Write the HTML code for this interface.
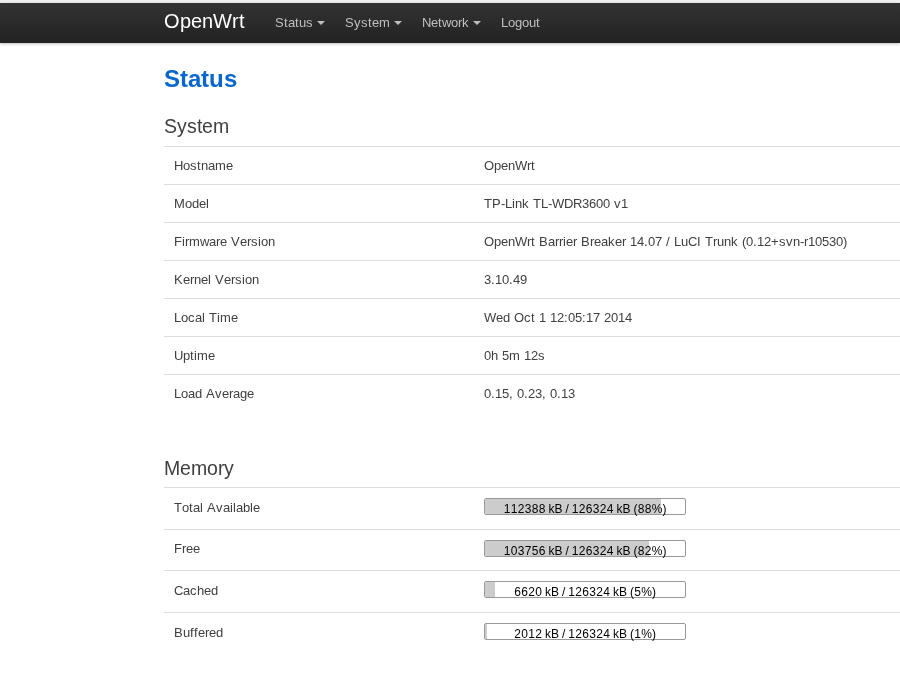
<!DOCTYPE html>
<html><head><meta charset="utf-8">
<style>
html,body{margin:0;padding:0;width:900px;height:700px;overflow:hidden;background:#fff;}
body{font-family:"Liberation Sans",sans-serif;font-kerning:none;font-size:13px;line-height:18px;color:#404040;position:relative;}
#wrap{position:absolute;left:0;top:0;width:900px;height:700px;will-change:transform;}
#strip{position:absolute;left:0;top:0;width:900px;height:3px;background:#f0f0f0;}
#nav{position:absolute;left:0;top:3px;width:900px;height:40px;background:linear-gradient(to bottom,#333 0%,#222 100%);box-shadow:0 1px 3px rgba(0,0,0,.25);}
.t{position:absolute;white-space:nowrap;}
i{display:inline-block;font-style:normal;}
#brand{left:164px;top:-2px;height:40px;line-height:40px;font-size:20px;color:#fff;}
.ni{top:0;height:40px;line-height:40px;font-size:13px;color:#bfbfbf;}
.caret{position:absolute;top:18px;width:0;height:0;border-left:4px solid transparent;border-right:4px solid transparent;border-top:4px solid #bfbfbf;}
h2{position:absolute;left:164px;margin:0;font-size:24px;font-weight:bold;color:#0866cf;line-height:30px;white-space:nowrap;}
.leg{left:164px;font-size:19.5px;line-height:24px;color:#404040;}
.hl{position:absolute;left:164px;width:736px;height:1px;background:#ddd;}
.c{font-size:13px;line-height:18px;color:#404040;}
.bar{position:absolute;left:484px;width:200px;height:15px;border:1px solid #999;border-radius:2px;background:#fff;}
.fill{position:absolute;left:0;top:0;bottom:0;background:#ccc;border-radius:1px 0 0 1px;}
.btxt{position:absolute;left:0;right:0;top:3px;text-align:center;font-size:12px;line-height:15px;color:#000;white-space:nowrap;}
</style></head><body><div id="wrap">
<div id="strip"></div>
<div id="nav">
<div class="t" id="brand"><i style="width:16px">O</i><i style="width:11px">p</i><i style="width:11px">e</i><i style="width:11px">n</i><i style="width:19px">W</i><i style="width:7px">r</i><i style="width:6px">t</i></div>
<div class="t ni" style="left:275px"><i style="width:9px">S</i><i style="width:4px">t</i><i style="width:7px">a</i><i style="width:4px">t</i><i style="width:7px">u</i><i style="width:7px">s</i></div><div class="caret" style="left:317px"></div>
<div class="t ni" style="left:345px"><i style="width:9px">S</i><i style="width:7px">y</i><i style="width:7px">s</i><i style="width:4px">t</i><i style="width:7px">e</i><i style="width:11px">m</i></div><div class="caret" style="left:394px"></div>
<div class="t ni" style="left:422px"><i style="width:9px">N</i><i style="width:7px">e</i><i style="width:4px">t</i><i style="width:9px">w</i><i style="width:7px">o</i><i style="width:4px">r</i><i style="width:7px">k</i></div><div class="caret" style="left:473px"></div>
<div class="t ni" style="left:501px"><i style="width:7px">L</i><i style="width:7px">o</i><i style="width:7px">g</i><i style="width:7px">o</i><i style="width:7px">u</i><i style="width:4px">t</i></div>
</div>
<h2 style="top:64px"><i style="width:16px">S</i><i style="width:8px">t</i><i style="width:13px">a</i><i style="width:8px">t</i><i style="width:15px">u</i><i style="width:13px">s</i></h2>
<div class="t leg" style="top:114px"><i style="width:13px">S</i><i style="width:10px">y</i><i style="width:10px">s</i><i style="width:5px">t</i><i style="width:11px">e</i><i style="width:16px">m</i></div>
<div class="hl" style="top:146px"></div>
<div class="t c" style="left:174px;top:157px"><i style="width:9px">H</i><i style="width:7px">o</i><i style="width:7px">s</i><i style="width:4px">t</i><i style="width:7px">n</i><i style="width:7px">a</i><i style="width:11px">m</i><i style="width:7px">e</i></div><div class="t c" style="left:484px;top:157px"><i style="width:10px">O</i><i style="width:7px">p</i><i style="width:7px">e</i><i style="width:7px">n</i><i style="width:12px">W</i><i style="width:4px">r</i><i style="width:4px">t</i></div>
<div class="hl" style="top:184px"></div>
<div class="t c" style="left:174px;top:195px"><i style="width:11px">M</i><i style="width:7px">o</i><i style="width:7px">d</i><i style="width:7px">e</i><i style="width:3px">l</i></div><div class="t c" style="left:484px;top:195px"><i style="width:8px">T</i><i style="width:9px">P</i><i style="width:4px">-</i><i style="width:7px">L</i><i style="width:3px">i</i><i style="width:7px">n</i><i style="width:7px">k</i><i style="width:4px">&nbsp;</i><i style="width:8px">T</i><i style="width:7px">L</i><i style="width:4px">-</i><i style="width:12px">W</i><i style="width:9px">D</i><i style="width:9px">R</i><i style="width:7px">3</i><i style="width:7px">6</i><i style="width:7px">0</i><i style="width:7px">0</i><i style="width:4px">&nbsp;</i><i style="width:7px">v</i><i style="width:7px">1</i></div>
<div class="hl" style="top:222px"></div>
<div class="t c" style="left:174px;top:233px"><i style="width:8px">F</i><i style="width:3px">i</i><i style="width:4px">r</i><i style="width:11px">m</i><i style="width:9px">w</i><i style="width:7px">a</i><i style="width:4px">r</i><i style="width:7px">e</i><i style="width:4px">&nbsp;</i><i style="width:9px">V</i><i style="width:7px">e</i><i style="width:4px">r</i><i style="width:7px">s</i><i style="width:3px">i</i><i style="width:7px">o</i><i style="width:7px">n</i></div><div class="t c" style="left:484px;top:233px"><i style="width:10px">O</i><i style="width:7px">p</i><i style="width:7px">e</i><i style="width:7px">n</i><i style="width:12px">W</i><i style="width:4px">r</i><i style="width:4px">t</i><i style="width:4px">&nbsp;</i><i style="width:9px">B</i><i style="width:7px">a</i><i style="width:4px">r</i><i style="width:4px">r</i><i style="width:3px">i</i><i style="width:7px">e</i><i style="width:4px">r</i><i style="width:4px">&nbsp;</i><i style="width:9px">B</i><i style="width:4px">r</i><i style="width:7px">e</i><i style="width:7px">a</i><i style="width:7px">k</i><i style="width:7px">e</i><i style="width:4px">r</i><i style="width:4px">&nbsp;</i><i style="width:7px">1</i><i style="width:7px">4</i><i style="width:4px">.</i><i style="width:7px">0</i><i style="width:7px">7</i><i style="width:4px">&nbsp;</i><i style="width:4px">/</i><i style="width:4px">&nbsp;</i><i style="width:7px">L</i><i style="width:7px">u</i><i style="width:9px">C</i><i style="width:4px">I</i><i style="width:4px">&nbsp;</i><i style="width:8px">T</i><i style="width:4px">r</i><i style="width:7px">u</i><i style="width:7px">n</i><i style="width:7px">k</i><i style="width:4px">&nbsp;</i><i style="width:4px">(</i><i style="width:7px">0</i><i style="width:4px">.</i><i style="width:7px">1</i><i style="width:7px">2</i><i style="width:8px">+</i><i style="width:7px">s</i><i style="width:7px">v</i><i style="width:7px">n</i><i style="width:4px">-</i><i style="width:4px">r</i><i style="width:7px">1</i><i style="width:7px">0</i><i style="width:7px">5</i><i style="width:7px">3</i><i style="width:7px">0</i><i style="width:4px">)</i></div>
<div class="hl" style="top:260px"></div>
<div class="t c" style="left:174px;top:271px"><i style="width:9px">K</i><i style="width:7px">e</i><i style="width:4px">r</i><i style="width:7px">n</i><i style="width:7px">e</i><i style="width:3px">l</i><i style="width:4px">&nbsp;</i><i style="width:9px">V</i><i style="width:7px">e</i><i style="width:4px">r</i><i style="width:7px">s</i><i style="width:3px">i</i><i style="width:7px">o</i><i style="width:7px">n</i></div><div class="t c" style="left:484px;top:271px"><i style="width:7px">3</i><i style="width:4px">.</i><i style="width:7px">1</i><i style="width:7px">0</i><i style="width:4px">.</i><i style="width:7px">4</i><i style="width:7px">9</i></div>
<div class="hl" style="top:298px"></div>
<div class="t c" style="left:174px;top:309px"><i style="width:7px">L</i><i style="width:7px">o</i><i style="width:7px">c</i><i style="width:7px">a</i><i style="width:3px">l</i><i style="width:4px">&nbsp;</i><i style="width:8px">T</i><i style="width:3px">i</i><i style="width:11px">m</i><i style="width:7px">e</i></div><div class="t c" style="left:484px;top:309px"><i style="width:12px">W</i><i style="width:7px">e</i><i style="width:7px">d</i><i style="width:4px">&nbsp;</i><i style="width:10px">O</i><i style="width:7px">c</i><i style="width:4px">t</i><i style="width:4px">&nbsp;</i><i style="width:7px">1</i><i style="width:4px">&nbsp;</i><i style="width:7px">1</i><i style="width:7px">2</i><i style="width:4px">:</i><i style="width:7px">0</i><i style="width:7px">5</i><i style="width:4px">:</i><i style="width:7px">1</i><i style="width:7px">7</i><i style="width:4px">&nbsp;</i><i style="width:7px">2</i><i style="width:7px">0</i><i style="width:7px">1</i><i style="width:7px">4</i></div>
<div class="hl" style="top:336px"></div>
<div class="t c" style="left:174px;top:347px"><i style="width:9px">U</i><i style="width:7px">p</i><i style="width:4px">t</i><i style="width:3px">i</i><i style="width:11px">m</i><i style="width:7px">e</i></div><div class="t c" style="left:484px;top:347px"><i style="width:7px">0</i><i style="width:7px">h</i><i style="width:4px">&nbsp;</i><i style="width:7px">5</i><i style="width:11px">m</i><i style="width:4px">&nbsp;</i><i style="width:7px">1</i><i style="width:7px">2</i><i style="width:7px">s</i></div>
<div class="hl" style="top:374px"></div>
<div class="t c" style="left:174px;top:385px"><i style="width:7px">L</i><i style="width:7px">o</i><i style="width:7px">a</i><i style="width:7px">d</i><i style="width:4px">&nbsp;</i><i style="width:9px">A</i><i style="width:7px">v</i><i style="width:7px">e</i><i style="width:4px">r</i><i style="width:7px">a</i><i style="width:7px">g</i><i style="width:7px">e</i></div><div class="t c" style="left:484px;top:385px"><i style="width:7px">0</i><i style="width:4px">.</i><i style="width:7px">1</i><i style="width:7px">5</i><i style="width:4px">,</i><i style="width:4px">&nbsp;</i><i style="width:7px">0</i><i style="width:4px">.</i><i style="width:7px">2</i><i style="width:7px">3</i><i style="width:4px">,</i><i style="width:4px">&nbsp;</i><i style="width:7px">0</i><i style="width:4px">.</i><i style="width:7px">1</i><i style="width:7px">3</i></div>
<div class="t leg" style="top:456px"><i style="width:16px">M</i><i style="width:11px">e</i><i style="width:16px">m</i><i style="width:11px">o</i><i style="width:6px">r</i><i style="width:10px">y</i></div>
<div class="hl" style="top:487px"></div>
<div class="t c" style="left:174px;top:499px"><i style="width:8px">T</i><i style="width:7px">o</i><i style="width:4px">t</i><i style="width:7px">a</i><i style="width:3px">l</i><i style="width:4px">&nbsp;</i><i style="width:9px">A</i><i style="width:7px">v</i><i style="width:7px">a</i><i style="width:3px">i</i><i style="width:3px">l</i><i style="width:7px">a</i><i style="width:7px">b</i><i style="width:3px">l</i><i style="width:7px">e</i></div>
<div class="bar" style="top:498px"><div class="fill" style="width:176px"></div><div class="btxt"><i style="width:7px">1</i><i style="width:7px">1</i><i style="width:7px">2</i><i style="width:7px">3</i><i style="width:7px">8</i><i style="width:7px">8</i><i style="width:3px">&nbsp;</i><i style="width:6px">k</i><i style="width:8px">B</i><i style="width:3px">&nbsp;</i><i style="width:3px">/</i><i style="width:3px">&nbsp;</i><i style="width:7px">1</i><i style="width:7px">2</i><i style="width:7px">6</i><i style="width:7px">3</i><i style="width:7px">2</i><i style="width:7px">4</i><i style="width:3px">&nbsp;</i><i style="width:6px">k</i><i style="width:8px">B</i><i style="width:3px">&nbsp;</i><i style="width:4px">(</i><i style="width:7px">8</i><i style="width:7px">8</i><i style="width:11px">%</i><i style="width:4px">)</i></div></div>
<div class="hl" style="top:529px"></div>
<div class="t c" style="left:174px;top:540px"><i style="width:8px">F</i><i style="width:4px">r</i><i style="width:7px">e</i><i style="width:7px">e</i></div>
<div class="bar" style="top:540px"><div class="fill" style="width:164px"></div><div class="btxt"><i style="width:7px">1</i><i style="width:7px">0</i><i style="width:7px">3</i><i style="width:7px">7</i><i style="width:7px">5</i><i style="width:7px">6</i><i style="width:3px">&nbsp;</i><i style="width:6px">k</i><i style="width:8px">B</i><i style="width:3px">&nbsp;</i><i style="width:3px">/</i><i style="width:3px">&nbsp;</i><i style="width:7px">1</i><i style="width:7px">2</i><i style="width:7px">6</i><i style="width:7px">3</i><i style="width:7px">2</i><i style="width:7px">4</i><i style="width:3px">&nbsp;</i><i style="width:6px">k</i><i style="width:8px">B</i><i style="width:3px">&nbsp;</i><i style="width:4px">(</i><i style="width:7px">8</i><i style="width:7px">2</i><i style="width:11px">%</i><i style="width:4px">)</i></div></div>
<div class="hl" style="top:570px"></div>
<div class="t c" style="left:174px;top:582px"><i style="width:9px">C</i><i style="width:7px">a</i><i style="width:7px">c</i><i style="width:7px">h</i><i style="width:7px">e</i><i style="width:7px">d</i></div>
<div class="bar" style="top:581px"><div class="fill" style="width:10px"></div><div class="btxt"><i style="width:7px">6</i><i style="width:7px">6</i><i style="width:7px">2</i><i style="width:7px">0</i><i style="width:3px">&nbsp;</i><i style="width:6px">k</i><i style="width:8px">B</i><i style="width:3px">&nbsp;</i><i style="width:3px">/</i><i style="width:3px">&nbsp;</i><i style="width:7px">1</i><i style="width:7px">2</i><i style="width:7px">6</i><i style="width:7px">3</i><i style="width:7px">2</i><i style="width:7px">4</i><i style="width:3px">&nbsp;</i><i style="width:6px">k</i><i style="width:8px">B</i><i style="width:3px">&nbsp;</i><i style="width:4px">(</i><i style="width:7px">5</i><i style="width:11px">%</i><i style="width:4px">)</i></div></div>
<div class="hl" style="top:612px"></div>
<div class="t c" style="left:174px;top:624px"><i style="width:9px">B</i><i style="width:7px">u</i><i style="width:4px">f</i><i style="width:4px">f</i><i style="width:7px">e</i><i style="width:4px">r</i><i style="width:7px">e</i><i style="width:7px">d</i></div>
<div class="bar" style="top:623px"><div class="fill" style="width:2px"></div><div class="btxt"><i style="width:7px">2</i><i style="width:7px">0</i><i style="width:7px">1</i><i style="width:7px">2</i><i style="width:3px">&nbsp;</i><i style="width:6px">k</i><i style="width:8px">B</i><i style="width:3px">&nbsp;</i><i style="width:3px">/</i><i style="width:3px">&nbsp;</i><i style="width:7px">1</i><i style="width:7px">2</i><i style="width:7px">6</i><i style="width:7px">3</i><i style="width:7px">2</i><i style="width:7px">4</i><i style="width:3px">&nbsp;</i><i style="width:6px">k</i><i style="width:8px">B</i><i style="width:3px">&nbsp;</i><i style="width:4px">(</i><i style="width:7px">1</i><i style="width:11px">%</i><i style="width:4px">)</i></div></div>
</div></body></html>
